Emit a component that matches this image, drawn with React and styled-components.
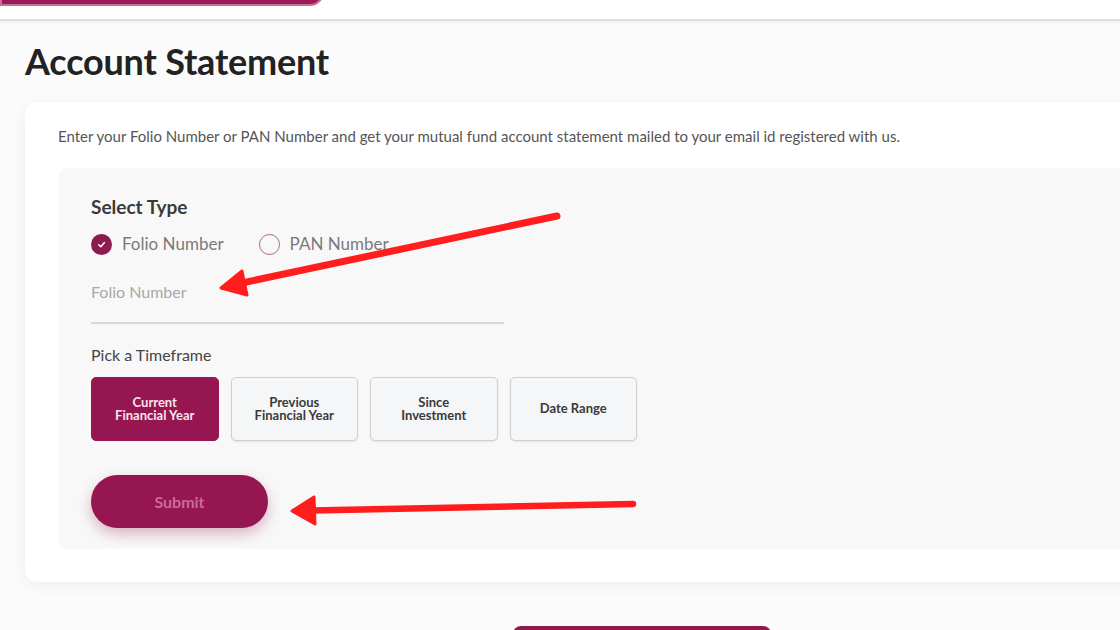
import React, { useState } from 'react'
import styled, { createGlobalStyle } from 'styled-components'

const GlobalStyle = createGlobalStyle`
body {
  margin: 0;
  background: #fbfbfb;
  font-family: Lato, "Open Sans", sans-serif;
  overflow: hidden;
}
`

const Page = styled.div`
position: relative;
width: 1120px;
height: 630px;
overflow: hidden;
`

const Header = styled.header`
height: 19px;
background: #ffffff;
border-bottom: 2px solid #dedede;
box-shadow: 0 1px 3px rgba(0,0,0,0.06);
overflow: hidden;
`

const TopButton = styled.div`
width: 320px;
height: 40px;
margin-top: -38px;
border-radius: 0 0 14px 0;
background: #9a1b55;
border: 2px solid #c9709a;
`

const Main = styled.main`
padding: 0 0 0 25px;
`

const Title = styled.h1`
margin: 19px 0 19px;
font-size: 36px;
line-height: 43px;
font-weight: 700;
color: #222222;
letter-spacing: -0.2px;
`

const Card = styled.section`
width: 1200px;
background: #ffffff;
border-radius: 12px;
box-shadow: 0 3px 16px rgba(0,0,0,0.06);
padding: 25px 33px 33px;
box-sizing: border-box;
`

const Intro = styled.p`
margin: 0 0 23px;
font-size: 15px;
line-height: 18px;
color: #555555;
`

const Panel = styled.div`
background: #f8f8f8;
border-radius: 10px;
padding: 27px 33px 21px;
`

const SectionTitle = styled.h3`
margin: 0;
font-size: 19px;
line-height: 23px;
font-weight: 700;
color: #3a3a3a;
`

const RadioRow = styled.div`
display: flex;
gap: 35px;
margin-top: 14px;
`

const RadioLabel = styled.label`
display: flex;
align-items: center;
gap: 10px;
font-size: 17px;
line-height: 24px;
color: #7a7a7a;
cursor: pointer;
`

const RadioDot = styled.span`
width: 21px;
height: 21px;
border-radius: 50%;
box-sizing: border-box;
display: flex;
align-items: center;
justify-content: center;
background: ${p => (p.$checked ? '#8e1a50' : 'transparent')};
border: ${p => (p.$checked ? 'none' : '1.5px solid #a6668a')};
`

const Input = styled.input`
display: block;
width: 413px;
margin-top: 26px;
padding: 0 0 21px;
border: none;
border-bottom: 2px solid #d8d8d8;
background: transparent;
font-family: inherit;
font-size: 16px;
line-height: 19px;
color: #333;
outline: none;

&::placeholder {
  color: #a8a8a8;
}
`

const SubTitle = styled.div`
margin-top: 21px;
font-size: 16px;
line-height: 19px;
color: #444444;
`

const Options = styled.div`
display: flex;
gap: 12px;
margin-top: 13px;
`

const Option = styled.button`
width: 127.5px;
height: 64px;
padding: 0 4px;
border-radius: 5px;
box-sizing: border-box;
display: flex;
flex-direction: column;
align-items: center;
justify-content: center;
font-family: inherit;
font-size: 13px;
font-weight: 700;
cursor: pointer;
border: 1px solid ${p => (p.$active ? '#951650' : '#cfcfcf')};
background: ${p => (p.$active ? '#951650' : '#f5f6f7')};
color: ${p => (p.$active ? '#fbe3ee' : '#3a3a3a')};
box-shadow: ${p => (p.$active ? 'none' : '0 1px 2px rgba(0,0,0,0.08)')};
`

const OptionLine = styled.span`
display: block;
line-height: 13.5px;
`

const Submit = styled.button`
display: block;
margin-top: 34px;
width: 177px;
height: 53px;
border: none;
border-radius: 27px;
background: #951650;
color: #c96b99;
font-family: inherit;
font-size: 16px;
font-weight: 700;
box-shadow: 0 6px 14px rgba(149,22,80,0.3);
`

const Footer = styled.div`
padding: 44px 0 0 488px;
`

const FooterButton = styled.div`
width: 258px;
height: 40px;
border-radius: 8px;
background: #8e1a4d;
`

const Overlay = styled.svg`
position: absolute;
top: 0;
left: 0;
pointer-events: none;
`

const timeframes = [
  ['Current', 'Financial Year'],
  ['Previous', 'Financial Year'],
  ['Since', 'Investment'],
  ['Date Range'],
]

const Check = () => (
  <svg width="11" height="11" viewBox="0 0 12 12">
    <path d="M3 6.3 L5.2 8.4 L9 4" fill="none" stroke="#fff" strokeWidth="1.7" strokeLinecap="round" strokeLinejoin="round" />
  </svg>
)

const App = () => {
  const [type, setType] = useState('folio')
  const [range, setRange] = useState(0)

  return (
    <Page>
      <GlobalStyle />
      <Header>
        <TopButton />
      </Header>
      <Main>
        <Title>Account Statement</Title>
        <Card>
          <Intro>
            Enter your Folio Number or PAN Number and get your mutual fund account statement mailed to your email id registered with us.
          </Intro>
          <Panel>
            <SectionTitle>Select Type</SectionTitle>
            <RadioRow>
              <RadioLabel onClick={() => setType('folio')}>
                <RadioDot $checked={type === 'folio'}>{type === 'folio' && <Check />}</RadioDot>
                Folio Number
              </RadioLabel>
              <RadioLabel onClick={() => setType('pan')}>
                <RadioDot $checked={type === 'pan'}>{type === 'pan' && <Check />}</RadioDot>
                PAN Number
              </RadioLabel>
            </RadioRow>
            <Input placeholder={type === 'folio' ? 'Folio Number' : 'PAN Number'} />
            <SubTitle>Pick a Timeframe</SubTitle>
            <Options>
              {timeframes.map((lines, i) => (
                <Option key={i} $active={range === i} onClick={() => setRange(i)}>
                  {lines.map((l, j) => (
                    <OptionLine key={j}>{l}</OptionLine>
                  ))}
                </Option>
              ))}
            </Options>
            <Submit>Submit</Submit>
          </Panel>
        </Card>
        <Footer>
          <FooterButton />
        </Footer>
      </Main>

      {/* red annotation arrows drawn over the screenshot */}
      <Overlay width="1120" height="630" viewBox="0 0 1120 630">
        <path d="M557 216 L242 283" stroke="#ff1d1d" strokeWidth="7" strokeLinecap="round" />
        <polygon points="221,288 247,295 242,271" fill="#ff1d1d" stroke="#ff1d1d" strokeWidth="3" strokeLinejoin="round" />
        <path d="M633 504 L312 510.5" stroke="#ff1d1d" strokeWidth="6.5" strokeLinecap="round" />
        <polygon points="292,511 315,524 314,497" fill="#ff1d1d" stroke="#ff1d1d" strokeWidth="3" strokeLinejoin="round" />
      </Overlay>
    </Page>
  )
}

export default App
